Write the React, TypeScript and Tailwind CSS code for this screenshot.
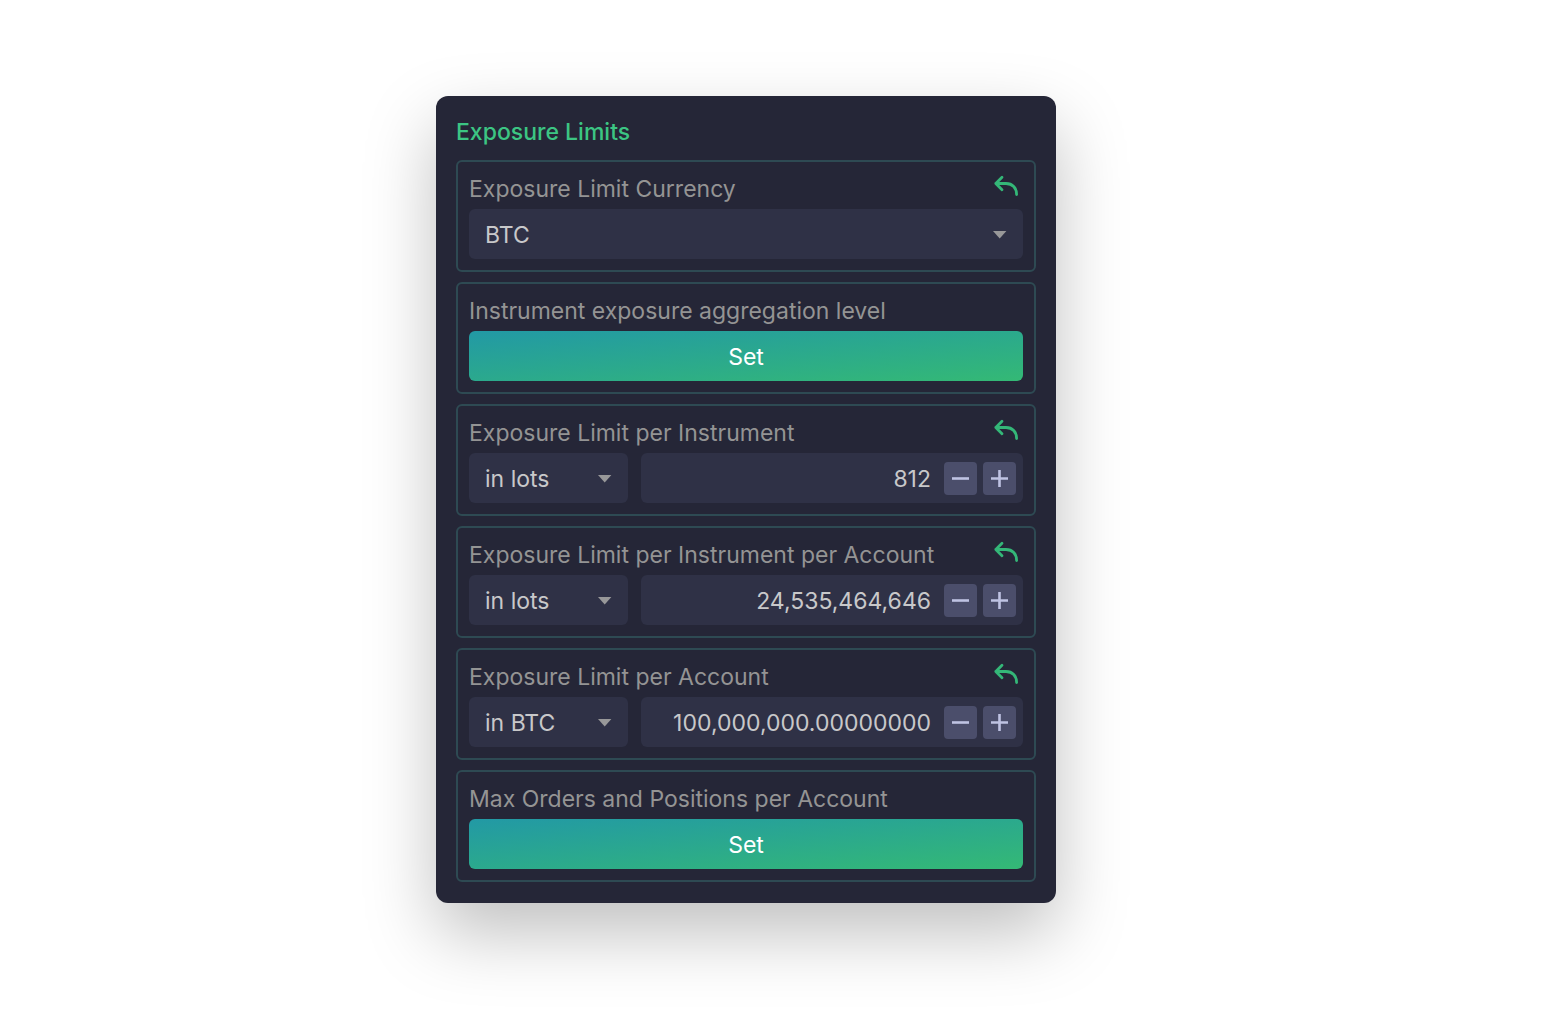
import { useId, useState } from "react";
import type { ReactNode } from "react";

function UndoIcon() {
  return (
    <svg width="26" height="22" viewBox="0 0 26 22" fill="none" aria-hidden="true">
      <path
        d="M9 2.2 2.8 8.5 9 14.8M2.8 8.5H13C19.4 8.5 23.6 12.8 23.6 19.6"
        stroke="#34b778"
        strokeWidth="2.8"
        strokeLinecap="round"
        strokeLinejoin="round"
      />
    </svg>
  );
}

function Card({
  label,
  htmlFor,
  onReset,
  children,
}: {
  label: string;
  htmlFor: string;
  onReset?: () => void;
  children: ReactNode;
}) {
  return (
    <div className="rounded-md border-2 border-[#2e4a53] px-[11px] pt-[11px] pb-[11px]">
      <div className="flex h-9 items-start justify-between">
        <label htmlFor={htmlFor} className="leading-8 whitespace-nowrap text-[#949494]">
          {label}
        </label>
        {onReset && (
          <button
            type="button"
            aria-label={`Reset ${label}`}
            onClick={onReset}
            className="mt-0.5 mr-1 cursor-pointer"
          >
            <UndoIcon />
          </button>
        )}
      </div>
      {children}
    </div>
  );
}

function Select({
  id,
  label,
  value,
  options,
  onChange,
}: {
  id?: string;
  label?: string;
  value: string;
  options: string[];
  onChange: (value: string) => void;
}) {
  return (
    <div className="relative w-full">
      <select
        id={id}
        aria-label={label}
        value={value}
        onChange={(e) => onChange(e.target.value)}
        className="h-[50px] w-full cursor-pointer appearance-none rounded-md bg-[#2f3146] pt-0.5 pr-10 pl-4 text-[#c8c8ca] outline-none"
      >
        {options.map((option) => (
          <option key={option}>{option}</option>
        ))}
      </select>
      <svg
        className="pointer-events-none absolute top-[22px] right-4"
        width="14"
        height="8"
        viewBox="0 0 14 8"
        aria-hidden="true"
      >
        <path d="M0 0h13.4L6.7 7.6z" fill="#989899" />
      </svg>
    </div>
  );
}

function StepButton({ label, path, onClick }: { label: string; path: string; onClick: () => void }) {
  return (
    <button
      type="button"
      aria-label={label}
      onClick={onClick}
      className="flex size-[33px] shrink-0 cursor-pointer items-center justify-center rounded-sm bg-[#4b4e6b]"
    >
      <svg width="17" height="17" viewBox="0 0 17 17" aria-hidden="true">
        <path d={path} stroke="#bfc3e3" strokeWidth="2.6" />
      </svg>
    </button>
  );
}

function SetCard({ label }: { label: string }) {
  const id = useId();
  return (
    <Card label={label} htmlFor={id}>
      <button
        id={id}
        type="button"
        className="block h-[50px] w-full cursor-pointer rounded-md bg-[linear-gradient(to_bottom_right,#2299a5,#34b975)] pt-0.5 text-white"
      >
        Set
      </button>
    </Card>
  );
}

function LimitCard({
  label,
  unit,
  units,
  amount,
  decimals = 0,
}: {
  label: string;
  unit: string;
  units: string[];
  amount: number;
  decimals?: number;
}) {
  const id = useId();
  const format = (n: number) =>
    n.toLocaleString("en-US", { minimumFractionDigits: decimals, maximumFractionDigits: decimals });
  const [selected, setSelected] = useState(unit);
  const [text, setText] = useState(format(amount));

  const step = (delta: number) => {
    const current = Number(text.replace(/,/g, "")) || 0;
    setText(format(Math.max(0, current + delta)));
  };

  const reset = () => {
    setSelected(unit);
    setText(format(amount));
  };

  return (
    <Card label={label} htmlFor={id} onReset={reset}>
      <div className="flex gap-[13px]">
        <div className="w-[159px] shrink-0">
          <Select label={`${label} unit`} value={selected} options={units} onChange={setSelected} />
        </div>
        <div className="flex h-[50px] min-w-0 flex-1 items-center gap-1.5 rounded-md bg-[#2f3146] pr-[7px]">
          <input
            id={id}
            type="text"
            inputMode="decimal"
            value={text}
            onChange={(e) => setText(e.target.value)}
            className="h-full min-w-0 flex-1 bg-transparent pt-0.5 pr-[7px] text-right text-[#c8c8ca] outline-none"
          />
          <StepButton label="Decrease" path="M0 8.5h17" onClick={() => step(-1)} />
          <StepButton label="Increase" path="M0 8.5h17M8.5 0v17" onClick={() => step(1)} />
        </div>
      </div>
    </Card>
  );
}

export default function App() {
  const currencyId = useId();
  const [currency, setCurrency] = useState("BTC");

  return (
    <main className="flex min-h-screen items-start justify-center bg-white pt-24 pr-19 pb-28 font-['Inter',sans-serif] text-[23px]">
      <section className="w-full max-w-[620px] rounded-xl bg-[#252637] px-5 pt-5 pb-[21px] shadow-[0_30px_70px_rgba(0,0,0,0.25)]">
        <h1 className="mb-3 leading-8 font-medium text-[#3cc583]">Exposure Limits</h1>
        <div className="flex flex-col gap-[10px]">
          <Card
            label="Exposure Limit Currency"
            htmlFor={currencyId}
            onReset={() => setCurrency("BTC")}
          >
            <Select
              id={currencyId}
              value={currency}
              options={["BTC", "ETH", "USD", "EUR"]}
              onChange={setCurrency}
            />
          </Card>
          <SetCard label="Instrument exposure aggregation level" />
          <LimitCard
            label="Exposure Limit per Instrument"
            unit="in lots"
            units={["in lots", "in BTC"]}
            amount={812}
          />
          <LimitCard
            label="Exposure Limit per Instrument per Account"
            unit="in lots"
            units={["in lots", "in BTC"]}
            amount={24535464646}
          />
          <LimitCard
            label="Exposure Limit per Account"
            unit="in BTC"
            units={["in lots", "in BTC"]}
            amount={100000000}
            decimals={8}
          />
          <SetCard label="Max Orders and Positions per Account" />
        </div>
      </section>
    </main>
  );
}
